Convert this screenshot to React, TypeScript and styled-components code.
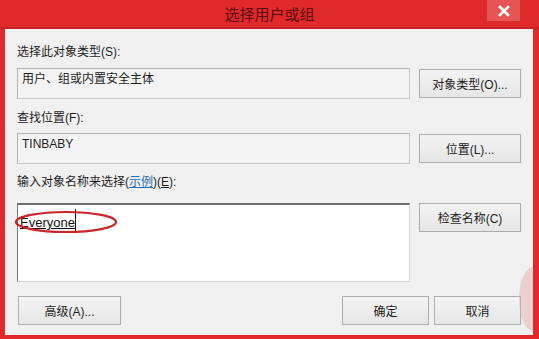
import React from 'react';
import styled, { createGlobalStyle } from 'styled-components';

const GlobalStyle = createGlobalStyle`
  html, body {
    margin: 0;
    padding: 0;
    background: #e0292b;
  }
  body {
    font-family: "Liberation Sans", "Noto Sans CJK SC", sans-serif;
  }
`;

interface FieldType {
  ruled?: boolean;
}

interface BtnType {
  w?: number;
}

function App(): JSX.Element {
  return (
    <>
      <GlobalStyle />
      <Window>
        <TitleBar>
          <span />
          <Title>选择用户或组</Title>
          <CloseButton>
            <svg width="12" height="12" viewBox="0 0 12 12">
              <path d="M2 2 L10 10 M10 2 L2 10" stroke="#fff" strokeWidth="2.6" strokeLinecap="square" />
            </svg>
          </CloseButton>
        </TitleBar>
        <Body>
          <Label>选择此对象类型(S):</Label>
          <FieldRow>
            <ReadBox>用户、组或内置安全主体</ReadBox>
            <Button>对象类型(O)...</Button>
          </FieldRow>

          <Label style={{ marginTop: 11, marginBottom: 7 }}>查找位置(F):</Label>
          <FieldRow>
            <ReadBox>TINBABY</ReadBox>
            <Button>位置(L)...</Button>
          </FieldRow>

          <Label style={{ marginTop: 10, marginBottom: 13 }}>
            输入对象名称来选择(<LinkText>示例</LinkText>)(<u>E</u>):
          </Label>
          <FieldRow ruled>
            <NameArea>
              <NameText>Everyone</NameText>
              <Caret />
              <Mark width="104" height="24" viewBox="0 0 104 24">
                <ellipse cx="52" cy="12" rx="50" ry="10" fill="none" stroke="#c9262a" strokeWidth="2.2" />
              </Mark>
            </NameArea>
            <Button>检查名称(C)</Button>
          </FieldRow>

          <Footer>
            <Button w={103}>高级(A)...</Button>
            <FooterRight>
              <Button w={87}>确定</Button>
              <Button w={87}>取消</Button>
            </FooterRight>
          </Footer>
          <Watermark />
        </Body>
      </Window>
    </>
  );
}

const Window = styled.div`
  width: 539px;
  height: 339px;
  display: flex;
  flex-direction: column;
  background: #e0292b;
  overflow: hidden;
`;

const TitleBar = styled.div`
  box-sizing: border-box;
  height: 29px;
  display: grid;
  grid-template-columns: 1fr auto 1fr;
  border-bottom: 2px solid #c92325;
`;

const Title = styled.div`
  font-family: "Noto Sans CJK SC", sans-serif;
  font-size: 15px;
  line-height: 27px;
  color: #5c0c0e;
`;

const CloseButton = styled.div`
  justify-self: end;
  align-self: start;
  margin-right: 19px;
  width: 33px;
  height: 21px;
  background: #e55556;
  display: flex;
  align-items: center;
  justify-content: center;
`;

const Body = styled.div`
  position: relative;
  flex: 1;
  margin: 0 6px 4px 5px;
  padding: 15px 12px 0 12px;
  background: #f0f0f0;
  display: flex;
  flex-direction: column;
  color: #1e1e1e;
  font-size: 12px;
  overflow: hidden;
`;

const Label = styled.div`
  height: 16px;
  line-height: 16px;
  margin-bottom: 8px;
  font-size: 12px;
`;

const LinkText = styled.span`
  color: #1d6fb8;
  text-decoration: underline;
`;

const FieldRow = styled.div<FieldType>`
  display: grid;
  grid-template-columns: 393px 102px;
  column-gap: 9px;
  align-items: ${({ ruled }) => (ruled ? 'start' : 'center')};
`;

const ReadBox = styled.div`
  box-sizing: border-box;
  height: 31px;
  padding: 2px 4px;
  line-height: 16px;
  border: 1px solid #b3b3b3;
  border-right-color: #c9c9c9;
  border-bottom-color: #c9c9c9;
  background: #f3f3f3;
`;

const Button = styled.div<BtnType>`
  box-sizing: border-box;
  width: ${({ w }) => (w ? `${w}px` : 'auto')};
  height: 29px;
  display: flex;
  align-items: center;
  justify-content: center;
  border: 1px solid #acacac;
  background: linear-gradient(#f3f3f3, #e6e6e6);
  color: #1e1e1e;
  font-size: 12px;
`;

const NameArea = styled.div`
  position: relative;
  box-sizing: border-box;
  height: 79px;
  padding: 10px 2px;
  display: flex;
  align-items: flex-start;
  background: #ffffff;
  border: 1px solid #d6d6d6;
  border-top: 2px solid #6e6e6e;
  border-left: 1px solid #7a7a7a;
`;

const NameText = styled.span`
  font-size: 13px;
  line-height: 16px;
  text-decoration: underline;
  color: #111;
`;

const Caret = styled.span`
  width: 1px;
  height: 22px;
  margin-top: -6px;
  background: #111;
`;

const Mark = styled.svg`
  position: absolute;
  left: -4px;
  top: 5px;
`;

const Footer = styled.div`
  margin-top: 14px;
  padding-left: 1px;
  display: flex;
  justify-content: space-between;
`;

const FooterRight = styled.div`
  display: flex;
  gap: 5px;
`;

const Watermark = styled.div`
  position: absolute;
  right: -14px;
  top: 238px;
  width: 28px;
  height: 64px;
  border-radius: 50%;
  background: rgba(228, 160, 160, 0.4);
`;

export default App;
